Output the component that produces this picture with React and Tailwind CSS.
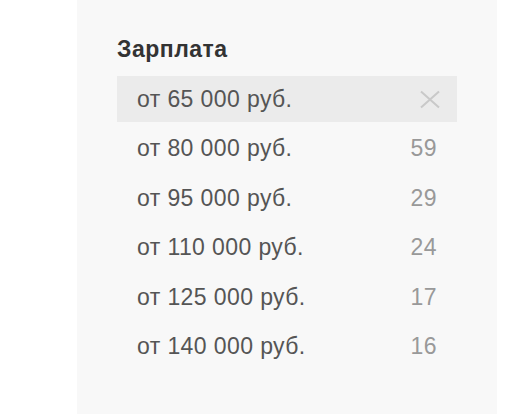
const OPTIONS = [
  { label: 'от 65 000 руб.', selected: true },
  { label: 'от 80 000 руб.', count: 59 },
  { label: 'от 95 000 руб.', count: 29 },
  { label: 'от 110 000 руб.', count: 24 },
  { label: 'от 125 000 руб.', count: 17 },
  { label: 'от 140 000 руб.', count: 16 },
]

function ClearIcon() {
  return (
    <svg width="22" height="19" viewBox="0 0 22 19" className="-mr-1">
      <path d="M2 1.5 L20 17.5 M20 1.5 L2 17.5" stroke="#c9c9c9" strokeWidth="2" fill="none" />
    </svg>
  )
}

export default function App() {
  return (
    <div className="flex h-[414px] bg-white font-['Liberation_Sans',Arial,sans-serif]">
      <div className="ml-[77px] w-[420px] h-full bg-[#f8f8f8] px-10 pt-[36px]">
        {/* Header */}
        <h3 className="text-[23px] leading-[27px] tracking-[0.5px] font-bold text-[#333]">Зарплата</h3>

        {/* Options */}
        <ul className="mt-[13px] flex flex-col gap-[3.5px]">
          {OPTIONS.map((o) => (
            <li
              key={o.label}
              className={`flex items-center justify-between h-[46px] px-5 text-[23px] tracking-[0.4px] ${o.selected ? 'bg-[#ebebeb]' : ''}`}
            >
              <span className="text-[#555]">{o.label}</span>
              {o.selected ? <ClearIcon /> : <span className="text-[#999]">{o.count}</span>}
            </li>
          ))}
        </ul>
      </div>
    </div>
  )
}
